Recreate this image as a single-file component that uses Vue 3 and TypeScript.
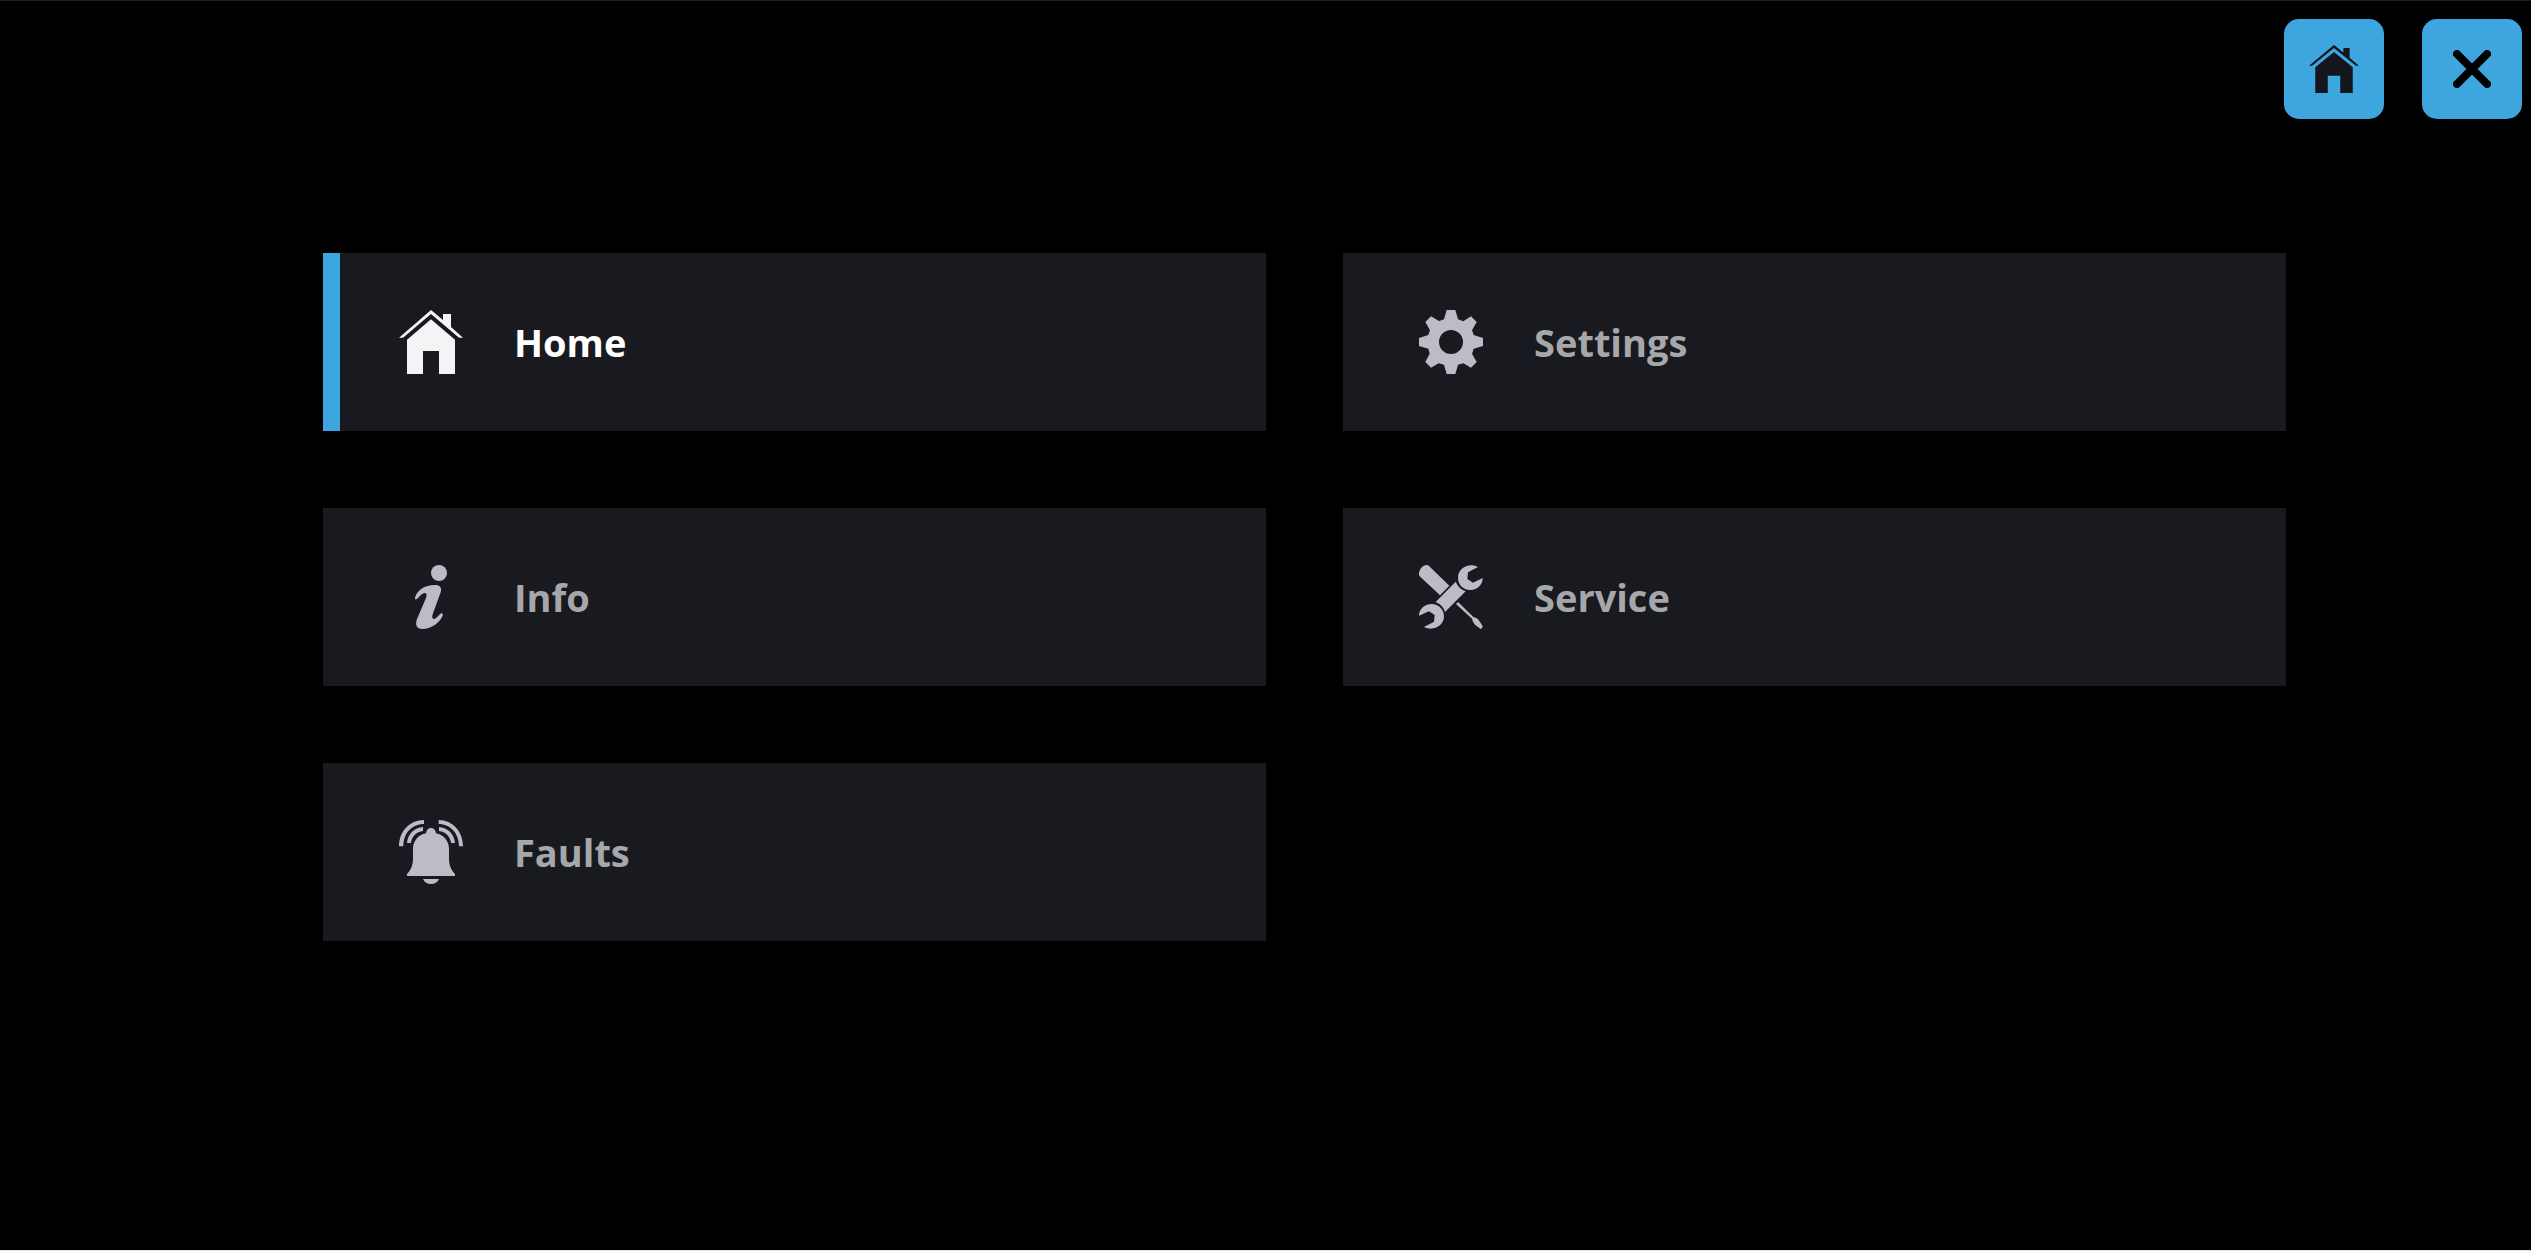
<script setup lang="ts">
import { ref } from 'vue'

interface MenuItem {
  id: string
  label: string
  paths: string[]
}

const housePaths: string[] = [
  'M27 113 L123 30 L159 60 V42 H183 V81 L219 113 H207 L123 42 L39 113 Z',
  'M51 119 L123 58 L195 119 V222 H147 V153 H99 V222 H51 Z',
]

const items: MenuItem[] = [
  { id: 'home', label: 'Home', paths: housePaths },
  {
    id: 'settings',
    label: 'Settings',
    paths: [
      'M110 30 H136 L144 58 Q152 61 160 64 L183 49 L200 66 L186 91 Q189 98 191 105 L219 114 V138 L191 146 Q189 153 186 161 L200 186 L183 203 L160 190 Q152 193 144 194 L136 222 H110 L102 194 Q94 193 86 190 L63 203 L46 186 L59 161 Q57 153 55 146 L27 138 V114 L55 105 Q57 98 60 91 L46 66 L63 49 L87 63 Q94 61 102 58 Z M123 90 A36 36 0 1 0 123 162 A36 36 0 1 0 123 90 Z',
    ],
  },
  {
    id: 'info',
    label: 'Info',
    paths: [
      'M147 30 A24 24 0 1 1 147 78 A24 24 0 1 1 147 30 Z',
      'M75 129 C80 106 105 90 133 90 C151 90 156 98 152 112 L128 178 C124 191 130 195 137 190 C144 185 149 178 153 175 C157 173 160 177 158 182 C148 204 122 222 98 222 C79 222 75 209 81 192 L108 129 C113 115 106 112 98 116 C89 120 86 130 79 133 C76 134 74 132 75 129 Z',
    ],
  },
  {
    id: 'service',
    label: 'Service',
    paths: [
      'M27 54 C29 42 38 31 50 30 Q54 30 57 33 L118 92 L90 121 L29 64 Q26 60 27 54 Z',
      'M137 80 Q146 101 167 109 L105 171 Q99 150 77 141 Z',
      'M204 36 C177 22 144 39 144 68 C144 90 161 105 181 105 C203 105 219 88 218 69 L189 83 L172 72 L174 52 Z',
      'M42 216 C69 230 102 213 102 184 C102 162 85 147 65 147 C43 147 27 163 27 182 L57 169 L74 180 L72 200 Z',
      'M144 141 L190 186 Q201 188 206 195 L218 213 Q218 221 212 222 L195 209 Q188 203 186 191 L138 147 Z',
    ],
  },
  {
    id: 'faults',
    label: 'Faults',
    paths: [
      'M27 109 C27 65 58 30 102 30 V42 C65 42 40 70 40 109 Z',
      'M219 109 C219 65 188 30 146 30 V42 C181 42 207 70 207 109 Z',
      'M51 99 C53 72 73 53 99 51 V63 C80 65 65 79 63 99 Z',
      'M195 99 C193 72 173 53 147 51 V63 C166 65 181 79 183 99 Z',
      'M108 70 C109 60 115 54 123 54 C131 54 137 60 138 70 C162 75 177 93 177 117 V145 C177 169 184 179 195 193 V198 H51 V193 C62 179 69 169 69 145 V117 C69 93 84 75 108 70 Z',
      'M99 207 H147 C143 217 134 222 123 222 C112 222 103 217 99 207 Z',
    ],
  },
]

const active = ref<string>('home')
</script>

<template>
  <div class="screen">
    <header class="toolbar">
      <button class="tool" type="button" aria-label="Home" @click="active = 'home'">
        <svg class="tool-house" viewBox="27 30 192 192" preserveAspectRatio="none" aria-hidden="true">
          <path v-for="d in housePaths" :key="d" :d="d" />
        </svg>
      </button>
      <button class="tool" type="button" aria-label="Close">
        <svg class="tool-close" viewBox="0 0 38 38" aria-hidden="true">
          <path d="M4 4 L34 34 M34 4 L4 34" />
        </svg>
      </button>
    </header>
    <nav class="menu">
      <button
        v-for="item in items"
        :key="item.id"
        type="button"
        class="card"
        :class="{ active: item.id === active }"
        @click="active = item.id"
      >
        <svg class="icon" viewBox="27 30 192 192" aria-hidden="true">
          <path v-for="d in item.paths" :key="d" :d="d" fill-rule="evenodd" />
        </svg>
        <span>{{ item.label }}</span>
      </button>
    </nav>
  </div>
</template>

<style>
body {
  background: #000;
}
</style>

<style scoped>
.screen {
  box-sizing: border-box;
  min-height: 100vh;
  border-top: 1px solid #1e1e1e;
  border-bottom: 1px solid #f0dfe2;
  background: #000;
  font-family: 'Open Sans', 'Noto Sans', sans-serif;
}

.toolbar {
  display: flex;
  justify-content: flex-end;
  gap: 38px;
  padding: 18px 9px 0;
}

.tool {
  display: flex;
  align-items: center;
  justify-content: center;
  width: 100px;
  height: 100px;
  padding: 0;
  border: 0;
  border-radius: 15px;
  background: #3ea6df;
  cursor: pointer;
}

.tool-house {
  width: 50px;
  height: 48px;
  fill: #15151d;
}

.tool-close {
  width: 38px;
  height: 38px;
  fill: none;
  stroke: #000;
  stroke-width: 8;
  stroke-linecap: round;
}

.menu {
  display: grid;
  grid-template-columns: 1fr 1fr;
  gap: 77px;
  padding: 134px 245px 0 323px;
}

.card {
  display: flex;
  align-items: center;
  gap: 51px;
  height: 178px;
  padding: 0 59px;
  border: 0;
  border-left: 17px solid #191a1f;
  background: #191a1f;
  color: #a6a7ab;
  font-family: inherit;
  font-size: 38px;
  font-weight: 700;
  line-height: 52px;
  text-align: left;
  cursor: pointer;
}

.card.active {
  border-left-color: #3ea6df;
  color: #fff;
}

.icon {
  flex: none;
  width: 64px;
  height: 64px;
  fill: #bbbcc5;
}

.card.active .icon {
  fill: #f4f4f7;
}
</style>
